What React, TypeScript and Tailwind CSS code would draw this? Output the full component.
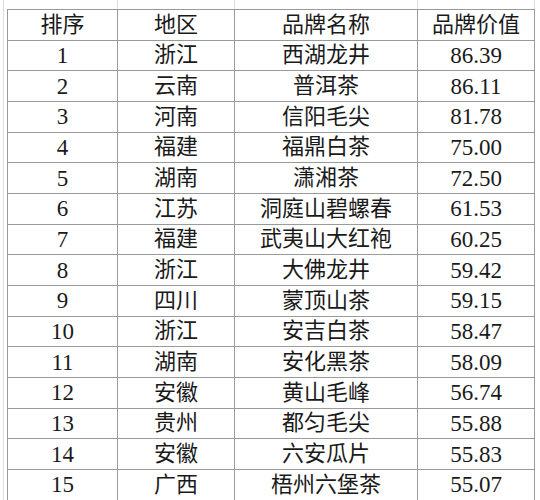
import React from "react";

type Row = [string, string, string, string];

const header: Row = ["排序", "地区", "品牌名称", "品牌价值"];

const rows: Row[] = [
  ["1", "浙江", "西湖龙井", "86.39"],
  ["2", "云南", "普洱茶", "86.11"],
  ["3", "河南", "信阳毛尖", "81.78"],
  ["4", "福建", "福鼎白茶", "75.00"],
  ["5", "湖南", "潇湘茶", "72.50"],
  ["6", "江苏", "洞庭山碧螺春", "61.53"],
  ["7", "福建", "武夷山大红袍", "60.25"],
  ["8", "浙江", "大佛龙井", "59.42"],
  ["9", "四川", "蒙顶山茶", "59.15"],
  ["10", "浙江", "安吉白茶", "58.47"],
  ["11", "湖南", "安化黑茶", "58.09"],
  ["12", "安徽", "黄山毛峰", "56.74"],
  ["13", "贵州", "都匀毛尖", "55.88"],
  ["14", "安徽", "六安瓜片", "55.83"],
  ["15", "广西", "梧州六堡茶", "55.07"],
];

const font = { fontFamily: '"Liberation Serif", "Noto Sans CJK SC", serif' };

export default function App() {
  return (
    <div className="w-[540px] h-[500px] bg-white overflow-hidden text-[#1a1a1a] pl-[3px]" style={font}>
      <div className="h-full border-l border-[#dcdcdc] pl-[3px]">
        <div className="h-[9px] pl-px grid grid-cols-[110px_117px_183px_117px]">
          <div className="border-r border-[#dedede]" />
          <div className="border-r border-[#dedede]" />
          <div className="border-r border-[#dedede]" />
          <div className="border-r border-[#dedede]" />
        </div>
        <div className="w-[528px] border-t border-l border-[#9a9a9a]">
          {[header, ...rows].map((r, i) => (
            <div
              key={i}
              className="grid grid-cols-[110px_117px_183px_117px] h-[30.67px] border-b border-[#9a9a9a]"
            >
              {r.map((c, j) => (
                <div
                  key={j}
                  className={`flex items-center justify-center border-r border-[#9a9a9a] leading-none ${
                    i > 0 && (j === 0 || j === 3) ? "text-[23px]" : "text-[22px]"
                  }`}
                >
                  {c}
                </div>
              ))}
            </div>
          ))}
        </div>
      </div>
    </div>
  );
}
